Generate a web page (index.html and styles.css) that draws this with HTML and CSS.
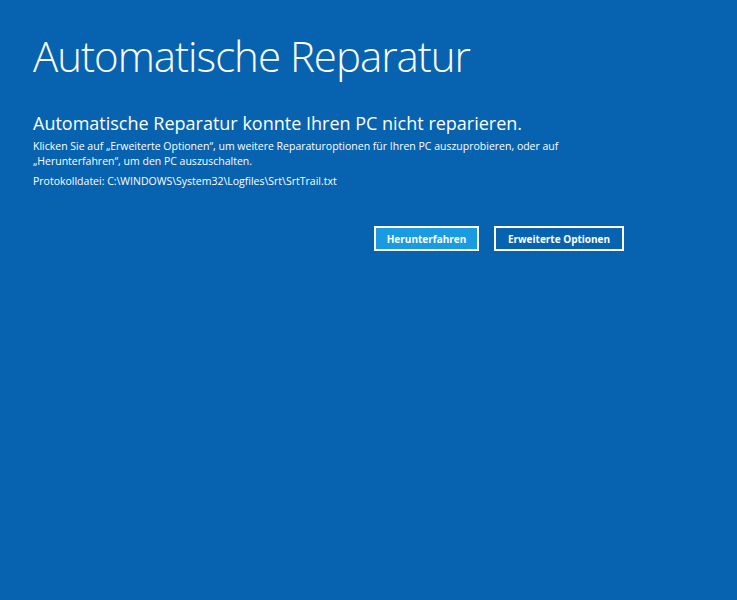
FILE: index.html
```html
<!DOCTYPE html>
<html lang="de">

<head>
    <meta charset="UTF-8">
    <title>Automatische Reparatur</title>
    <link rel="stylesheet" href="styles.css">
</head>

<body>
    <div class="screen">
        <h1>Automatische Reparatur</h1>
        <h2>Automatische Reparatur konnte Ihren PC nicht reparieren.</h2>
        <p class="info">Klicken Sie auf „Erweiterte Optionen“, um weitere Reparaturoptionen für Ihren PC auszuprobieren, oder auf „Herunterfahren“, um den PC auszuschalten.</p>
        <p class="log">Protokolldatei: C:\WINDOWS\System32\Logfiles\Srt\SrtTrail.txt</p>
        <div class="actions">
            <button type="button" class="btn btn-primary">Herunterfahren</button>
            <button type="button" class="btn btn-wide">Erweiterte Optionen</button>
        </div>
    </div>
</body>

</html>
```

FILE: styles.css
```css
body {
    margin: 0;
    background-color: #0763b0;
    color: #fff;
    font-family: "Open Sans", "Noto Sans", sans-serif;
    height: 100vh;
}

.screen {
    padding: 27px 0 0 33px;
    width: 560px;
}

h1 {
    font-size: 42px;
    font-weight: 300;
    margin: 0;
    line-height: 58px;
    letter-spacing: -1px;
}

h2 {
    font-size: 18px;
    font-weight: 400;
    margin: 26px 0 0;
    line-height: 24px;
}

.info {
    font-size: 10.5px;
    line-height: 15px;
    margin: 4px 0 0;
}

.log {
    font-size: 10.5px;
    line-height: 15px;
    margin: 5px 0 0;
}

.actions {
    display: flex;
    gap: 15px;
    margin: 37px 0 0 341px;
}

.btn {
    flex-shrink: 0;
    background-color: transparent;
    color: #fff;
    border: 2px solid #fff;
    font-family: inherit;
    font-size: 10px;
    font-weight: 700;
    height: 25px;
    width: 105px;
    padding: 0;
    white-space: nowrap;
}

.btn-primary {
    background-color: #1a9ae0;
}

.btn-wide {
    width: 130px;
}
```
